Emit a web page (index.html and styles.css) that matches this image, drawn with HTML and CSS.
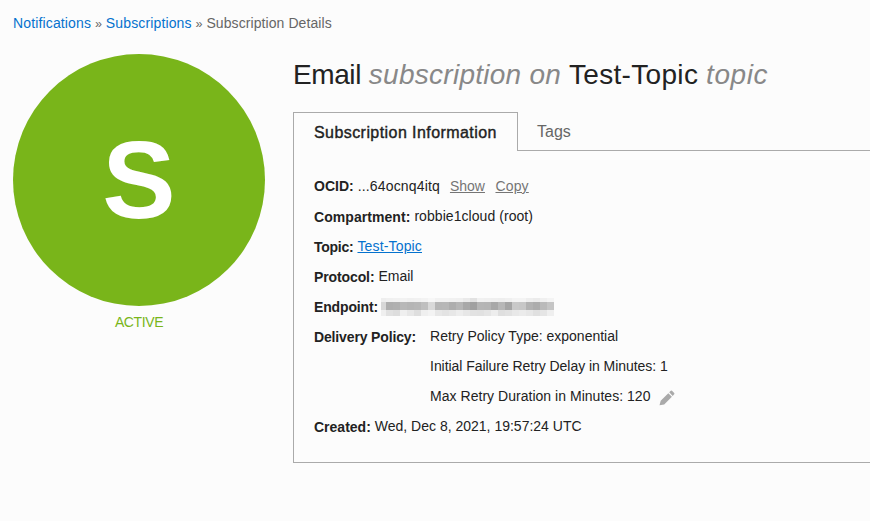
FILE: index.html
```
<!DOCTYPE html>
<html lang="en">
<head>
<meta charset="utf-8">
<title>Subscription Details</title>
<link rel="stylesheet" href="styles.css">
</head>
<body>
<nav class="breadcrumb"><a class="notif" href="#">Notifications</a> <span class="sep">»</span> <a class="subs" href="#">Subscriptions</a> <span class="sep">»</span> <span class="current">Subscription Details</span></nav>
<main class="layout">
  <aside class="status">
    <div class="badge"><span>S</span></div>
    <div class="state">ACTIVE</div>
  </aside>
  <section class="details">
    <h1><span class="kind">Email</span> <em>subscription on</em> <span class="name">Test-Topic</span> <em class="suffix">topic</em></h1>
    <div class="tabs">
      <div class="tab active"><span>Subscription Information</span></div>
      <div class="tab"><span>Tags</span></div>
    </div>
    <div class="panel">
      <div class="row"><b class="k-ocid">OCID:</b><span class="v-ocid">...64ocnq4itq</span><a class="action show" href="#">Show</a><a class="action copy" href="#">Copy</a></div>
      <div class="row"><b class="k-comp">Compartment:</b><span class="v-comp">robbie1cloud (root)</span></div>
      <div class="row"><b class="k-topic">Topic:</b><a class="topic" href="#">Test-Topic</a></div>
      <div class="row"><b class="k-proto">Protocol:</b><span class="v-proto">Email</span></div>
      <div class="row"><b class="k-end">Endpoint:</b><svg class="mosaic" width="174" height="18" shape-rendering="crispEdges"></svg></div>
      <div class="row policy"><b class="k-policy">Delivery Policy:</b>
        <div class="values">
          <div class="line"><span class="p1">Retry Policy Type: exponential</span></div>
          <div class="line"><span class="p2">Initial Failure Retry Delay in Minutes: 1</span></div>
          <div class="line"><span class="p3">Max Retry Duration in Minutes: 120</span><svg class="pencil" width="16" height="16" viewBox="0 0 16 16"><path d="M0.5 15.3 1.7 10.8 9.3 3.2 12.9 6.8 5.2 14.4ZM10.2 2.3 11.8.8Q12.4.3 13 .8L15.2 3Q15.7 3.6 15.2 4.2L13.7 5.9Z"/></svg></div>
        </div>
      </div>
      <div class="row"><b class="k-created">Created:</b><span class="v-created">Wed, Dec 8, 2021, 19:57:24 UTC</span></div>
    </div>
  </section>
</main>
<script src="mosaic.js"></script>
</body>
</html>
```
FILE: styles.css
```
* { box-sizing: border-box; }
body {
  margin: 0;
  height: 521px;
  overflow: hidden;
  padding: 13px 0 0 13px;
  background: #fcfcfc;
  color: #222;
  font: 14px/20px "Liberation Sans", Arial, sans-serif;
}
a { color: #0572ce; text-decoration: none; }
.breadcrumb { height: 41px; color: #666; white-space: nowrap; }
.notif, .subs { letter-spacing: 0.14px; }
.sep { font-size: 12.5px; line-height: 1; }
.current { letter-spacing: 0.08px; }
.layout { display: flex; gap: 28px; }
.status { width: 252px; flex: none; }
.badge {
  display: flex;
  align-items: center;
  justify-content: center;
  width: 252px;
  height: 252px;
  border-radius: 50%;
  background: #79b51a;
  color: #fff;
  font-size: 110px;
  font-weight: bold;
}
.state { padding-top: 6px; text-align: center; color: #79b51a; letter-spacing: -0.4px; }
.details { flex: 1; min-width: 0; }
h1 { margin: 0; height: 58px; padding-top: 5px; font-size: 28px; line-height: 32px; font-weight: normal; white-space: nowrap; }
h1 em { color: #888; letter-spacing: 0.27px; }
h1 .kind { letter-spacing: -0.4px; }
h1 .name { letter-spacing: 0.32px; }
h1 .suffix { letter-spacing: 0.6px; }
.tabs { display: flex; height: 39px; font-size: 16px; }
.tab { flex: 1; padding: 10px 0 0 19px; border-bottom: 1px solid #aaa; color: #666; }
.tab.active { flex: none; width: 225px; padding: 10px 0 0 20px; border: 1px solid #aaa; border-bottom: 0; color: #222; letter-spacing: 0.43px; -webkit-text-stroke: 0.4px #222; }
.panel { height: 312px; padding: 20px 0 0 20px; border: solid #aaa; border-width: 0 0 1px 1px; }
.row { display: flex; height: 30px; line-height: 30px; white-space: nowrap; }
.row b { margin-right: 4px; padding-top: 1px; }
.row .k-ocid { padding-top: 0; }
.v-ocid { letter-spacing: 0.16px; }
.k-comp, .v-comp { letter-spacing: 0.06px; }
.k-topic { letter-spacing: -0.25px; }
.k-proto { letter-spacing: -0.11px; }
.row .k-end { letter-spacing: -0.15px; margin-right: 3px; }
.k-policy { letter-spacing: -0.14px; }
.p2 { letter-spacing: -0.05px; }
.p3 { letter-spacing: 0.03px; }
.action { color: #757575; text-decoration: underline; margin-left: 10px; }
.action.copy { margin-left: 10.5px; letter-spacing: 0.15px; }
.topic { text-decoration: underline; letter-spacing: 0.15px; }
.mosaic { margin-top: 7px; }
.policy { height: 90px; }
.row .k-policy { margin-right: 14px; }
.line { display: flex; height: 30px; }
.pencil { margin: 9px 0 0 8.5px; fill: #aaa; }
```
FILE: mosaic.js
```
// Redacted endpoint: one column per block, three rows of grey levels.
const rows = [
  { y: 0, h: 4, g: [238,240,241,242,240,241,243,247,242,242,241,240,234,226,241,240,239,238,240,244,244,238,235,240,244] },
  { y: 4, h: 8, g: [215,174,176,184,181,183,191,217,182,183,174,182,168,160,181,180,168,183,165,201,199,178,172,186,197] },
  { y: 12, h: 6, g: [239,225,221,239,231,222,239,243,231,227,231,237,231,226,225,229,237,223,226,232,235,231,224,229,239] }
];
const mosaic = document.querySelector(".mosaic");
for (const row of rows) {
  row.g.forEach((level, i) => {
    const cell = document.createElementNS("http://www.w3.org/2000/svg", "rect");
    cell.setAttribute("x", i ? i * 7 - 2 : 0);
    cell.setAttribute("y", row.y);
    cell.setAttribute("width", i ? 7 : 5);
    cell.setAttribute("height", row.h);
    cell.setAttribute("fill", `rgb(${level},${level},${level})`);
    mosaic.append(cell);
  });
}
```
